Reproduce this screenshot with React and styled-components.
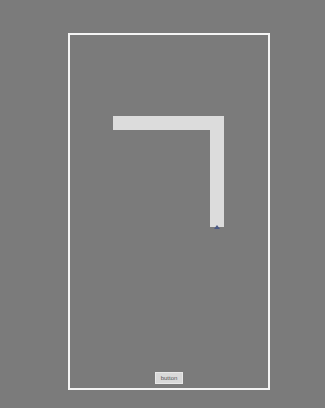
import styled, { createGlobalStyle } from "styled-components";

const Global = createGlobalStyle`
  html, body {
    margin: 0;
    padding: 0;
    background-color: #7b7b7b;
    font-family: "Liberation Sans", Arial, sans-serif;
  }
`

const Page = styled.div`
  width: 325px;
  height: 408px;
  padding: 33px 0 0 68px;
  box-sizing: border-box;
`

const Frame = styled.div`
  width: 202px;
  height: 357px;
  box-sizing: border-box;
  border: 2px solid #f4f4f4;
  display: flex;
  flex-direction: column;
  padding: 81px 0 4px 43px;
`

const Corner = styled.div`
  position: relative;
  width: 111px;
  height: 111px;
  box-sizing: border-box;
  border-top: 14px solid #dcdcdc;
  border-right: 14px solid #dcdcdc;
`

const Caret = styled.div`
  position: absolute;
  right: -10px;
  bottom: -2px;
  width: 0;
  height: 0;
  border-left: 3px solid transparent;
  border-right: 3px solid transparent;
  border-bottom: 4px solid #4b5a86;
`

const Footer = styled.div`
  margin-top: auto;
  margin-left: -43px;
  display: flex;
  justify-content: center;
`

const Button = styled.button`
  width: 28px;
  height: 12px;
  padding: 0;
  border: 1px solid #e8e8e8;
  background-color: #d9d9d9;
  color: #555;
  font-family: "Liberation Sans", Arial, sans-serif;
  font-size: 6px;
  line-height: 10px;
`

export default function App() {
  return (
    <Page>
      <Global />
      <Frame>
        <Corner>
          <Caret />
        </Corner>
        <Footer>
          <Button>button</Button>
        </Footer>
      </Frame>
    </Page>
  )
}
